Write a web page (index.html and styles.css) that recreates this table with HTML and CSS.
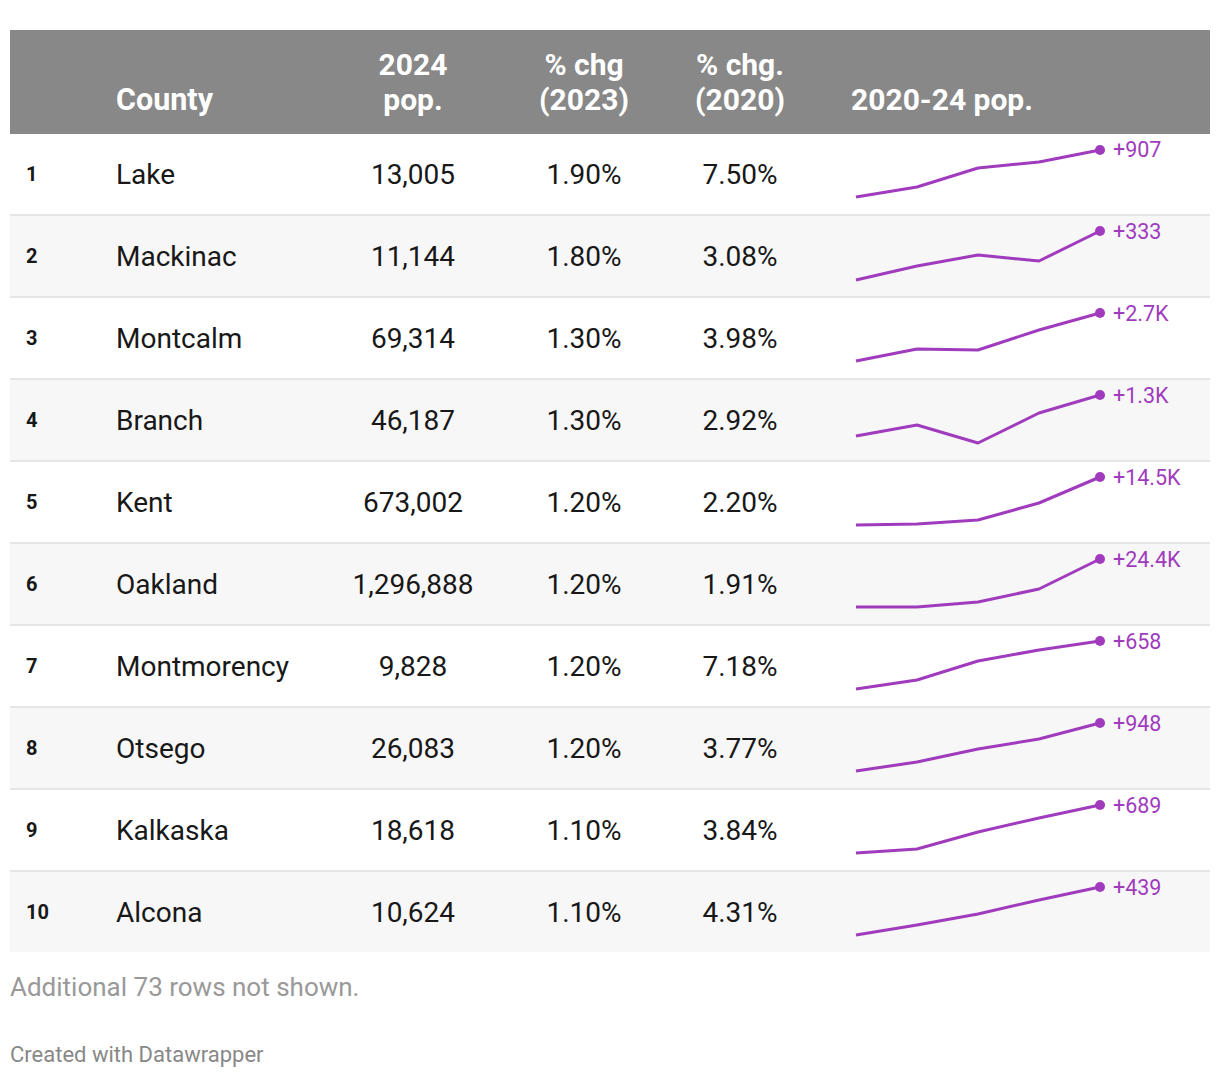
FILE: index.html
```html
<!DOCTYPE html>
<html lang="en">
<head>
<meta charset="utf-8">
<title>Michigan counties population</title>
<link rel="stylesheet" href="styles.css">
</head>
<body>
<div class="chart">
  <div class="table">
    <div class="row head">
      <div class="c rank"></div>
      <div class="c name">County</div>
      <div class="c num">2024<br>pop.</div>
      <div class="c num">% chg<br>(2023)</div>
      <div class="c num">% chg.<br>(2020)</div>
      <div class="c spark-h">2020-24 pop.</div>
    </div>

    <div class="row">
      <div class="c rank">1</div><div class="c name">Lake</div><div class="c num">13,005</div><div class="c num">1.90%</div><div class="c num">7.50%</div>
      <div class="c spark"><svg class="sl" width="360" height="80" viewBox="0 0 360 80"><polyline points="6,63 67,53 128,34 189,28 250,16"/><circle cx="250" cy="16" r="5"/><text x="263" y="15">+907</text></svg></div>
    </div>
    <div class="row alt">
      <div class="c rank">2</div><div class="c name">Mackinac</div><div class="c num">11,144</div><div class="c num">1.80%</div><div class="c num">3.08%</div>
      <div class="c spark"><svg class="sl" width="360" height="80" viewBox="0 0 360 80"><polyline points="6,64 67,50 128,39 189,45 250,15"/><circle cx="250" cy="15" r="5"/><text x="263" y="15">+333</text></svg></div>
    </div>
    <div class="row">
      <div class="c rank">3</div><div class="c name">Montcalm</div><div class="c num">69,314</div><div class="c num">1.30%</div><div class="c num">3.98%</div>
      <div class="c spark"><svg class="sl" width="360" height="80" viewBox="0 0 360 80"><polyline points="6,63 67,51 128,52 189,32 250,15"/><circle cx="250" cy="15" r="5"/><text x="263" y="15">+2.7K</text></svg></div>
    </div>
    <div class="row alt">
      <div class="c rank">4</div><div class="c name">Branch</div><div class="c num">46,187</div><div class="c num">1.30%</div><div class="c num">2.92%</div>
      <div class="c spark"><svg class="sl" width="360" height="80" viewBox="0 0 360 80"><polyline points="6,56 67,45 128,63 189,33 250,15"/><circle cx="250" cy="15" r="5"/><text x="263" y="15">+1.3K</text></svg></div>
    </div>
    <div class="row">
      <div class="c rank">5</div><div class="c name">Kent</div><div class="c num">673,002</div><div class="c num">1.20%</div><div class="c num">2.20%</div>
      <div class="c spark"><svg class="sl" width="360" height="80" viewBox="0 0 360 80"><polyline points="6,63 67,62 128,58 189,41 250,15"/><circle cx="250" cy="15" r="5"/><text x="263" y="15">+14.5K</text></svg></div>
    </div>
    <div class="row alt">
      <div class="c rank">6</div><div class="c name">Oakland</div><div class="c num">1,296,888</div><div class="c num">1.20%</div><div class="c num">1.91%</div>
      <div class="c spark"><svg class="sl" width="360" height="80" viewBox="0 0 360 80"><polyline points="6,63 67,63 128,58 189,45 250,15"/><circle cx="250" cy="15" r="5"/><text x="263" y="15">+24.4K</text></svg></div>
    </div>
    <div class="row">
      <div class="c rank">7</div><div class="c name">Montmorency</div><div class="c num">9,828</div><div class="c num">1.20%</div><div class="c num">7.18%</div>
      <div class="c spark"><svg class="sl" width="360" height="80" viewBox="0 0 360 80"><polyline points="6,63 67,54 128,35 189,24 250,15"/><circle cx="250" cy="15" r="5"/><text x="263" y="15">+658</text></svg></div>
    </div>
    <div class="row alt">
      <div class="c rank">8</div><div class="c name">Otsego</div><div class="c num">26,083</div><div class="c num">1.20%</div><div class="c num">3.77%</div>
      <div class="c spark"><svg class="sl" width="360" height="80" viewBox="0 0 360 80"><polyline points="6,63 67,54 128,41 189,31 250,15"/><circle cx="250" cy="15" r="5"/><text x="263" y="15">+948</text></svg></div>
    </div>
    <div class="row">
      <div class="c rank">9</div><div class="c name">Kalkaska</div><div class="c num">18,618</div><div class="c num">1.10%</div><div class="c num">3.84%</div>
      <div class="c spark"><svg class="sl" width="360" height="80" viewBox="0 0 360 80"><polyline points="6,63 67,59 128,42 189,28 250,15"/><circle cx="250" cy="15" r="5"/><text x="263" y="15">+689</text></svg></div>
    </div>
    <div class="row alt last">
      <div class="c rank">10</div><div class="c name">Alcona</div><div class="c num">10,624</div><div class="c num">1.10%</div><div class="c num">4.31%</div>
      <div class="c spark"><svg class="sl" width="360" height="80" viewBox="0 0 360 80"><polyline points="6,63 67,53 128,42 189,28 250,15"/><circle cx="250" cy="15" r="5"/><text x="263" y="15">+439</text></svg></div>
    </div>
  </div>
  <div class="note">Additional 73 rows not shown.</div>
  <div class="credit">Created with Datawrapper</div>
</div>
</body>
</html>
```
FILE: styles.css
```css
* { box-sizing: border-box; }
html, body { margin: 0; padding: 0; background: #fff; }
body {
  font-family: Roboto, "Liberation Sans", sans-serif;
  color: #181818;
}
.chart { padding: 30px 10px 0 10px; }
.row {
  display: grid;
  grid-template-columns: 90px 230px 166px 176px 136px 1fr;
  height: 82px;
  border-bottom: 2px solid #e6e6e6;
  align-items: center;
  font-size: 28px;
}
.row.alt { background: #f7f7f7; }
.row.last { border-bottom: none; height: 80px; }
.row.head {
  background: #888888;
  color: #fff;
  font-weight: 700;
  height: 104px;
  border-bottom: none;
  align-items: end;
  padding-bottom: 17px;
  line-height: 35px;
  font-size: 30px;
}
.c { white-space: nowrap; }
.rank { padding-left: 16px; font-weight: 700; font-size: 20px; }
.name { padding-left: 16px; }
.head .name { padding-left: 16px; font-size: 30.5px; }
.num { text-align: center; }
.spark-h { padding-left: 43px; }
.spark { padding-left: 42px; height: 80px; align-self: start; }
.sl { display: block; overflow: visible; }
.sl polyline { fill: none; stroke: #a03bbe; stroke-width: 3; stroke-linejoin: round; stroke-linecap: butt; }
.sl circle { fill: #a03bbe; }
.sl text { fill: #a03bbe; font-family: Roboto, "Liberation Sans", sans-serif; font-size: 21.5px; dominant-baseline: central; }
.note {
  margin-top: 20px;
  font-size: 26px;
  line-height: 31px;
  color: #999;
}
.credit {
  margin-top: 39px;
  font-size: 22px;
  line-height: 26px;
  color: #888;
}
```
